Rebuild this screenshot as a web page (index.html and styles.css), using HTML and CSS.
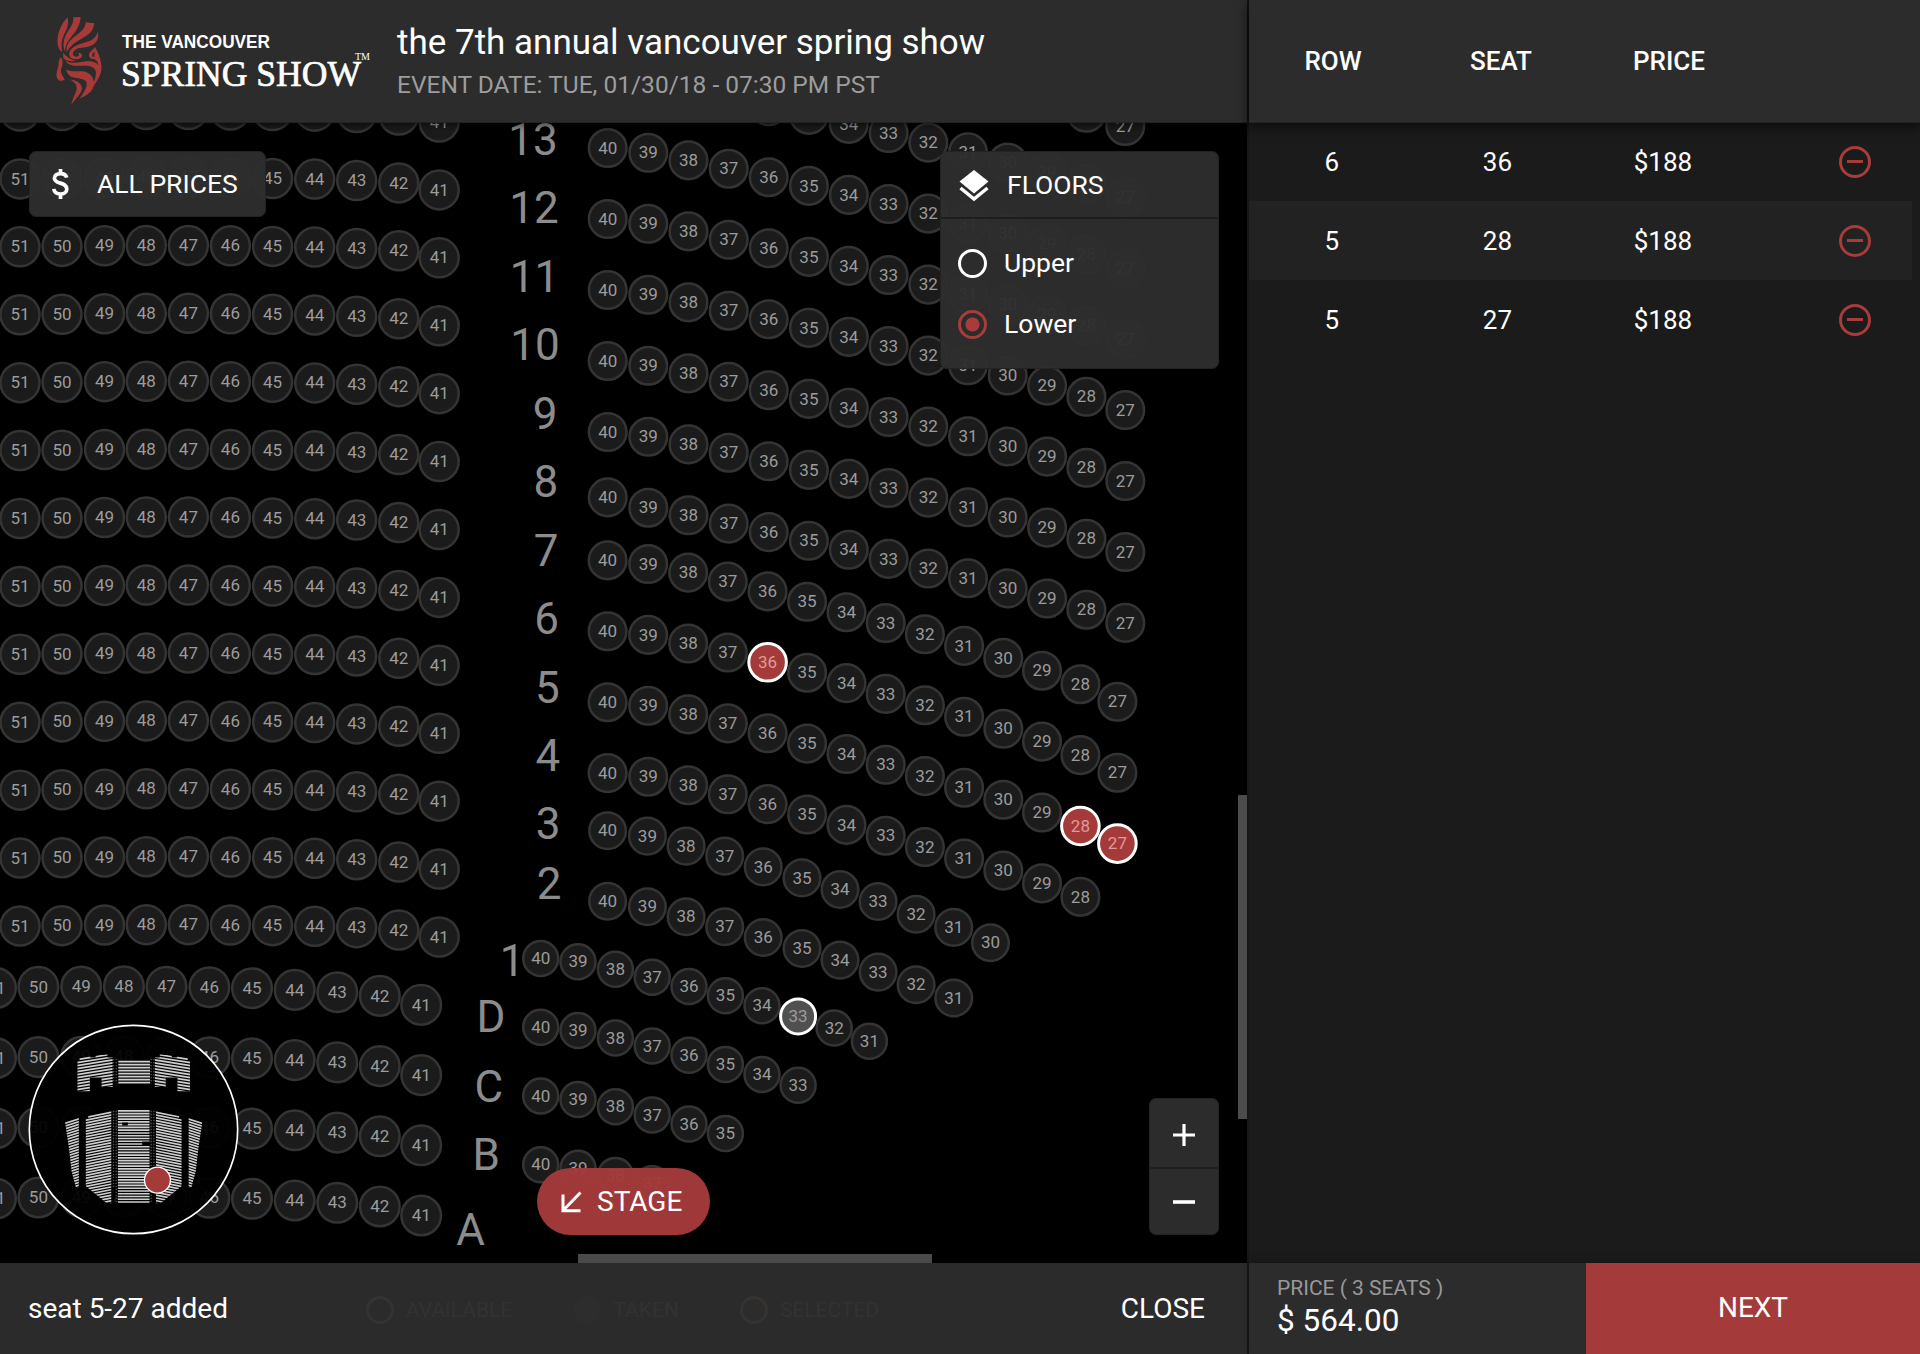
FILE: index.html
```html
<!DOCTYPE html>
<html lang="en">
<head>
<meta charset="utf-8">
<title>The Vancouver Spring Show – Seats</title>
<link rel="stylesheet" href="styles.css">
</head>
<body>
<div class="app">
  <main class="main">
    <header class="header">
      <svg class="logo" viewBox="0 0 340 110" width="340" height="110" role="img" aria-label="The Vancouver Spring Show">
        <g class="logo-mask" transform="translate(10 7) scale(.33333)">
          <path d="M53 16C32 36 20 68 23 98Q27 114 37 121C33 100 34 84 44 64C54 46 56 32 53 16Z"/>
          <path d="M70 16L92 15C90 42 77 58 63 76C50 92 46 104 45 119C36 98 42 76 54 58C66 40 71 30 70 16Z"/>
          <path d="M107 31L133 34C130 60 114 70 95 80C72 92 58 104 50 121C47 98 60 84 76 72C96 58 106 48 107 31Z"/>
          <path d="M143 59C149 82 137 96 118 103C100 110 88 104 75 114C66 121 66 132 78 134C88 134 90 127 84 124C92 121 99 128 95 135C86 147 62 142 58 131C55 117 66 106 82 99C105 90 137 88 143 59Z"/>
          <path d="M135 105C144 120 152 138 154 160C157 186 143 204 131 222C127 236 120 246 88 260C100 244 112 226 110 212C106 200 86 200 68 196C56 192 52 184 48 172C62 182 82 176 98 178C120 182 130 194 131 210C142 186 140 170 124 164C104 157 60 170 46 146C68 158 88 150 108 148C126 146 138 150 145 160C144 150 138 142 132 141C120 142 116 134 117 126C121 117 128 114 135 105Z"/>
          <path d="M33 136C42 150 36 164 33 172C31 186 41 194 44 204C34 208 26 208 21 198C16 186 26 166 26 154C26 146 28 142 33 136Z"/>
          <path d="M39 122C48 132 60 142 76 147C60 150 48 146 40 138Z"/>
          <path d="M61 203C80 204 94 214 96 228C95 246 76 258 64 279C68 254 82 240 80 224C78 214 70 208 61 203Z"/>
          <path class="logo-cut" d="M134 119C127 124 124 130 128 134L133 134Z"/>
        </g>
        <text class="logo-line1" x="82" y="43.3" textLength="148" lengthAdjust="spacingAndGlyphs">THE VANCOUVER</text>
        <text class="logo-line2" x="81" y="81.3" textLength="240" lengthAdjust="spacingAndGlyphs">SPRING SHOW</text>
        <text class="logo-tm" x="315" y="54.8" textLength="15" lengthAdjust="spacingAndGlyphs">TM</text>
      </svg>
      <div class="event">
        <h1 class="event-title">the 7th annual vancouver spring show</h1>
        <p class="event-date">EVENT DATE: TUE, 01/30/18 - 07:30 PM PST</p>
      </div>
    </header>

    <section class="map">
      <svg class="seats" id="seats" viewBox="0 122 1248 1141" width="1248" height="1141"></svg>

      <button class="panel prices">
        <svg width="19" height="32" viewBox="0 0 19 32"><path d="M15.7 9.6C15 6.700 12.700 5.600 9.500 5.600C6 5.600 3.400 7.300 3.400 10.200C3.400 16.500 15.800 13.700 15.800 20.900C15.800 24.300 12.700 26 9.500 26C5.700 26 3.200 24.300 2.800 20.900M9.500 1V6M9.500 26V31" fill="none" stroke="#fff" stroke-width="3.700"/></svg>
        <span>ALL PRICES</span>
      </button>

      <div class="panel floors">
        <div class="floors-head">
          <svg width="30" height="32" viewBox="0 0 30 32"><path d="M15 0L29.500 11.500L15 23.500L.5 11.500Z" fill="#fff"/><path d="M1.500 18L15 29L28.500 18" fill="none" stroke="#fff" stroke-width="3.500"/></svg>
          <span>FLOORS</span>
        </div>
        <div class="floors-body">
          <label class="floor"><i class="radio"></i>Upper</label>
          <label class="floor"><i class="radio radio-on"></i>Lower</label>
        </div>
      </div>

      <svg class="minimap" id="minimap" viewBox="-97 -63 634 634" width="211" height="211"></svg>

      <button class="stage">
        <svg width="21" height="22" viewBox="0 0 21 22"><path d="M19.500 1.500L3 18.500M2 3.500V19.800H19.500" fill="none" stroke="#fff" stroke-width="3"/></svg>
        <span>STAGE</span>
      </button>

      <div class="panel zoom">
        <button class="zoom-btn"><svg width="24" height="24" viewBox="0 0 24 24"><path d="M12 1V23M1 12H23" stroke="#fff" stroke-width="3.200"/></svg></button>
        <button class="zoom-btn"><svg width="24" height="24" viewBox="0 0 24 24"><path d="M1 12H23" stroke="#fff" stroke-width="3.600"/></svg></button>
      </div>

      <i class="bar-v"></i>
      <i class="bar-h"></i>
    </section>

    <footer class="footer">
      <span class="notice">seat 5-27 added</span>
      <div class="legend">
        <span class="key"><i class="dot"></i>AVAILABLE</span>
        <span class="key"><i class="dot dot-taken"></i>TAKEN</span>
        <span class="key"><i class="dot dot-selected"></i>SELECTED</span>
      </div>
      <button class="close">CLOSE</button>
    </footer>
  </main>

  <aside class="side">
    <div class="side-head"><span>ROW</span><span>SEAT</span><span>PRICE</span></div>
    <ul class="cart">
      <li class="item"><span>6</span><span>36</span><span>$188</span><i class="remove"></i></li>
      <li class="item"><span>5</span><span>28</span><span>$188</span><i class="remove"></i></li>
      <li class="item"><span>5</span><span>27</span><span>$188</span><i class="remove"></i></li>
    </ul>
    <div class="checkout">
      <div class="total">
        <span class="total-label">PRICE ( 3 SEATS )</span>
        <span class="total-value">$ 564.00</span>
      </div>
      <button class="next">NEXT</button>
    </div>
  </aside>
</div>
<script src="seats.js"></script>
</body>
</html>
```
FILE: styles.css
```css
* { box-sizing: border-box; }
body {
  margin: 0;
  background: #000;
  color: #fff;
  font: 26.5px/1 Roboto, sans-serif;
}
h1, p, ul { margin: 0; padding: 0; font-weight: 400; list-style: none; }
button { border: 0; padding: 0; background: none; color: inherit; font: inherit; }
svg { display: block; flex: none; }

.app { display: grid; grid-template-columns: 1247px 673px; height: 1354px; overflow: hidden; }
.main, .side { display: grid; grid-template-rows: 122px 1141px 91px; min-width: 0; }

.header {
  display: flex;
  align-items: flex-start;
  padding: 5px 0 0 40px;
  background: #2c2c2c;
  box-shadow: 0 1px 0 #222, 0 3px 8px rgba(0,0,0,.6);
  position: relative;
  z-index: 1;
}
.logo { margin-right: 17px; }
.logo-mask { fill: #a73a38; }
.logo-mask .logo-cut { fill: #2c2c2c; }
.logo text { fill: #fff; }
.logo-line1 { font: 700 18.500px "Liberation Sans", sans-serif; }
.logo-line2 { font: 400 36.500px "Liberation Serif", serif; stroke: #fff; stroke-width: .7px; }
.logo-tm { font: 400 10.500px "Liberation Serif", serif; }
.event-title { margin-top: 17px; font-size: 35px; line-height: 41px; white-space: nowrap; }
.event-date { margin-top: 8px; font-size: 24.500px; line-height: 28px; color: #9d9d9d; white-space: nowrap; }

.map { position: relative; overflow: hidden; background: #000; }
.seat circle { fill: #1b1b1b; stroke: #343434; stroke-width: 2.500; }
.seat text { fill: #9c9c9c; font-size: 17px; text-anchor: middle; }
.seat.selected circle { fill: #a43a3a; stroke: #fff; stroke-width: 3; }
.seat.selected text { fill: #e09a98; }
.seat.hover circle { fill: #505050; stroke: #fff; stroke-width: 3; }
.row-label { fill: #8c8c8c; font-size: 44px; text-anchor: middle; }

.panel {
  position: absolute;
  background: rgba(46,46,46,.96);
  border: 1px solid #232323;
  border-radius: 7px;
}
.prices { left: 29px; top: 29px; width: 237px; height: 66px; display: flex; align-items: center; gap: 27px; padding-left: 21px; }
.floors { left: 940px; top: 29px; width: 279px; height: 218px; }
.floors-head { display: flex; align-items: center; gap: 18px; height: 67px; padding: 2px 0 0 18px; border-bottom: 2px solid #1e1e1e; }
.floors-body { display: flex; flex-direction: column; gap: 32px; padding: 30px 0 0 17px; }
.floor { display: flex; align-items: center; gap: 17px; height: 29px; }
.radio { width: 29px; height: 29px; border: 3px solid #fff; border-radius: 50%; }
.radio-on { border-color: #a73c3a; background: radial-gradient(circle, #a73c3a 6.500px, transparent 7.500px); }

.minimap { position: absolute; left: 28px; top: 902px; }
.minimap .frame { fill: rgba(0,0,0,.94); stroke: #fff; stroke-width: 5; }
.minimap .rows { stroke: #cfcfcf; stroke-width: 5; }
.minimap .aisle { stroke: #555; stroke-width: 4; stroke-dasharray: 4 5; fill: none; }
.minimap .here { fill: #a43a3a; stroke: #fff; stroke-width: 4; }

.stage {
  position: absolute; left: 537px; top: 1046px; width: 173px; height: 67px;
  display: flex; align-items: center; gap: 15px; padding-left: 24px;
  border-radius: 34px; background: rgba(164,58,58,.97); font-size: 28px;
}
.zoom { left: 1149px; top: 976px; width: 70px; height: 137px; display: flex; flex-direction: column; }
.zoom-btn { flex: 1; display: flex; align-items: center; justify-content: center; }
.zoom-btn:first-child { padding-top: 3px; }
.zoom-btn + .zoom-btn { border-top: 2px solid #202020; }
.bar-v { position: absolute; left: 1238px; top: 673px; width: 9px; height: 324px; background: #4c4c4c; }
.bar-h { position: absolute; left: 578px; top: 1132px; width: 354px; height: 9px; background: #4a4a4a; }

.footer { display: flex; align-items: center; padding: 0 42px 0 28px; background: #2b2b2b; }
.notice { width: 338px; font-size: 28px; }
.legend { display: flex; flex: 1; padding-top: 3px; font-size: 21px; color: #323232; }
.key { display: flex; align-items: center; gap: 12px; }
.key:nth-child(2), .key:nth-child(3) { margin-left: 61px; }
.dot { width: 28px; height: 28px; border: 3px solid #333; border-radius: 50%; }
.dot-taken { border-color: #2d2d2d; background: #2d2d2d; }
.dot-selected { background: #2e2c2b; }
.close { font-size: 28px; }

.side { background: #1b1b1b; border-left: 2px solid #161616; }
.side-head, .item { display: grid; align-items: center; text-align: center; }
.side-head {
  grid-template-columns: repeat(3, 168px) 1fr;
  background: #2c2c2c;
  font-weight: 500;
  font-size: 26px;
  box-shadow: 0 1px 0 #222, 0 4px 12px rgba(0,0,0,.7);
  z-index: 1;
}
.item { grid-template-columns: repeat(3, 165.6px) 1fr; height: 79px; margin-right: 8px; font-size: 26px; }
.item:nth-child(even) { background: #222; }
.remove {
  width: 32px; height: 32px; margin-left: 93px; border: 3px solid #a73c3a; border-radius: 50%;
  background: linear-gradient(#a73c3a, #a73c3a) center / 16px 3px no-repeat;
}
.checkout { display: grid; grid-template-columns: 337px 1fr; box-shadow: 0 -2px 8px rgba(0,0,0,.25); }
.total { display: flex; flex-direction: column; padding: 14px 0 0 28px; background: #2c2c2c; }
.total-label { font-size: 21px; line-height: 22px; color: #999; }
.total-value { margin-top: 4px; font-size: 31.500px; line-height: 36px; }
.next { background: #a43a3a; font-size: 28px; padding-bottom: 2px; }
```
FILE: seats.js
```js
const NS = 'http://www.w3.org/2000/svg';
function add(parent, tag, attrs, text) {
  const el = document.createElementNS(NS, tag);
  for (const k in attrs) el.setAttribute(k, attrs[k]);
  if (text !== undefined) el.textContent = text;
  parent.appendChild(el);
  return el;
}

const seats = document.getElementById('seats');
const marks = { '6-36': 'selected', '5-28': 'selected', '5-27': 'selected', '1-33': 'hover' };

// xs and dys list one seat each, numbered downwards from `first`
function drawRow(row, first, last, xs, dys, y, r) {
  for (let i = 0; first - i >= last; i++) {
    const n = first - i;
    const g = add(seats, 'g', { class: 'seat ' + (marks[row + '-' + n] || '') });
    const cy = y + dys[i];
    add(g, 'circle', { cx: xs[i], cy, r: r - 1.2 });
    add(g, 'text', { x: xs[i], y: cy + 5.600 }, n);
  }
}

// centre block
const cx = [20, 62, 104.5, 146.3, 188.4, 230.4, 272.6, 314.7, 356.7, 398.8, 439.2];
const cdy = [-11, -11.4, -12, -12.4, -12.4, -12, -11.4, -10.8, -9.4, -7, 0];
for (let i = 0; i < 13; i++) drawRow('c', 51, 41, cx, cdy, 122 + 67.92 * i, 20.7);
const fx = [-4, 38.4, 81.2, 123.9, 166.5, 209.4, 252, 294.7, 337.3, 379.8, 421.2];
const fdy = [-16.9, -18, -18.3, -18.5, -18.2, -17.7, -16.7, -15, -12.7, -9, 0];
for (let i = 0; i < 4; i++) drawRow('f', 51, 41, fx, fdy, 1004.9 + 70.2 * i, 21);

// right block, back rows
const bx = [607.7, 648.3, 688.5, 728.7, 768.7, 808.9, 848.8, 888.6, 928.3, 968, 1007.7, 1047.1, 1086.4, 1125.3];
const bdy = [0, 4.8, 12.4, 20.7, 29.2, 37.9, 46.9, 56, 65.6, 75.3, 85.5, 95.6, 106.8, 120];
for (let row = 15; row >= 9; row--) drawRow(row, 40, 27, bx, bdy, 148 + 71 * (13 - row), 20);
drawRow(8, 40, 27, bx, [-5.500, ...bdy.slice(1)], 502.9, 20);

// right block, middle rows
const mx = [607.6, 648.2, 688.2, 727.8, 767.6, 807.1, 846.5, 885.7, 924.9, 964.1, 1003.3, 1042, 1080.4, 1117.4];
const mdy = [0, 3.6, 12.2, 21.2, 31, 41.4, 51.8, 62.6, 73.9, 85.5, 97.5, 110.3, 123.8, 141.4];
[7, 6, 5, 4].forEach((row, i) => drawRow(row, 40, row === 4 ? 28 : 27, mx, mdy, 560.4 + 70.9 * i, 20));

// right block, front rows
const nx = [607.6, 647.4, 686.1, 724.7, 763.2, 802, 840, 878.1, 916.1, 953.7, 990.5];
const ndy = [0, 5.400, 15.4, 25.400, 36.2, 47.2, 58.8, 70.8, 83.500, 96.7, 112];
drawRow(3, 40, 30, nx, ndy, 830.7, 19.5);
drawRow(2, 40, 31, nx, ndy, 901.3, 19.5);
const px = [540.7, 578, 615.4, 652.2, 689, 725.4, 762, 798.1, 834.2, 869.4];
const pdy = [0, 3.4, 10.8, 18.9, 28, 37.4, 47.3, 58, 69.600, 82.8];
[['1', 31], ['D', 33], ['C', 35], ['B', 37]].forEach(([row, last], i) =>
  drawRow(row, 40, last, px, pdy, 958.4 + 68.8 * i, 18.7));

[['13', 533, 155], ['12', 534, 223.3], ['11', 534.5, 291.8], ['10', 535, 360.2], ['9', 545, 428.7],
 ['8', 545.8, 497.2], ['7', 546, 565.6], ['6', 546.6, 634], ['5', 547.3, 702.500], ['4', 547.8, 771],
 ['3', 548.2, 839.2], ['2', 549, 898.8], ['1', 512, 976], ['D', 491, 1032.4], ['C', 488.8, 1101.5],
 ['B', 486.3, 1170], ['A', 470.5, 1244.5]
].forEach(([t, x, y]) => add(seats, 'text', { class: 'row-label', x, y }, t));

// overview of the whole hall
const mini = document.getElementById('minimap');
add(mini, 'circle', { class: 'frame', cx: 220, cy: 254, r: 313 });
const defs = add(mini, 'defs', {});
function block(id, shape, x1, x2, y1, y2, n, pitch, parent) {
  add(add(defs, 'clipPath', { id }), 'polygon', { points: shape });
  const g = add(parent, 'g', { class: 'rows', 'clip-path': 'url(#' + id + ')' });
  for (let i = 0; i < n; i++)
    add(g, 'line', { x1, x2, y1: y1 + pitch * i, y2: y2 + pitch * i });
}
block('upMid', '174,40 270,40 270,118 174,118', 174, 270, 50, 50, 8, 9, mini);
block('lowMid', '172,190 269,190 269,290 246,290 246,301 269,301 269,480 172,480', 172, 269, 198, 198, 34, 8.3, mini);
['L', 'R'].forEach(side => {
  const g = add(mini, 'g', side === 'R' ? { transform: 'translate(441 0) scale(-1 1)' } : {});
  block('up' + side, '58,34 90,28 90,38 106,38 106,32 142,28 142,38 158,38 158,126 124,126 124,98 89,98 89,140 51,140 51,48 58,48',
    50, 158, 44, 27, 13, 9, g);
  block('low' + side, '84,212 154,196 154,476 138,474 76,424 76,222 84,222', 70, 160, 219, 201, 36, 8.3, g);
  block('wing' + side, '14,230 56,216 56,428 47,428 34,380 26,310', 10, 60, 237, 221, 26, 8.3, g);
  add(g, 'path', { class: 'aisle', d: 'M160 42V115M168 42V115M160 198V430M168 198V474' });
});
add(mini, 'rect', { x: 186, y: 233, width: 17, height: 9, fill: '#000' });
add(mini, 'circle', { class: 'here', cx: 292, cy: 406, r: 39 });
```
